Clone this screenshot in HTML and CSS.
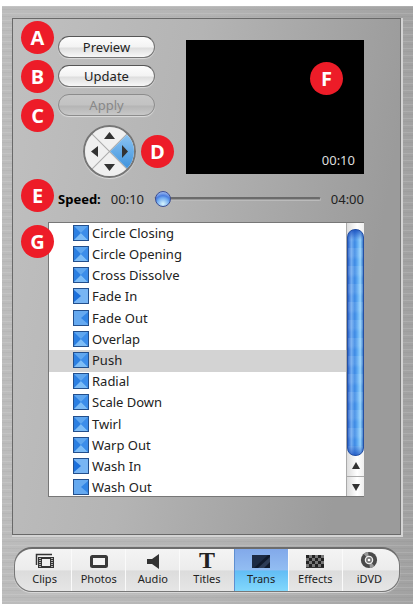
FILE: index.html
```html
<!DOCTYPE html>
<html lang="en">
<head>
    <meta charset="UTF-8">
    <meta name="viewport" content="width=device-width, initial-scale=1.0">
    <title>Transitions</title>
    <link rel="stylesheet" href="styles.css">
</head>
<body>
    <!-- Shared transition icons -->
    <svg class="defs" width="0" height="0" aria-hidden="true">
        <symbol id="both" viewBox="0 0 16 16">
            <rect width="16" height="16" fill="#3f8ee6"/>
            <path d="M1 1L8 8L1 15Z" fill="#2b7fe2"/>
            <path d="M1 1H15L8 8Z" fill="#5fa6ef"/>
            <path d="M1 15H15L8 8Z" fill="#7dbcf6"/>
            <path d="M15 1V15L8 8Z" fill="#3c8dea"/>
            <rect x=".5" y=".5" width="15" height="15" fill="none" stroke="#234f8c"/>
        </symbol>
        <symbol id="in" viewBox="0 0 16 16">
            <rect width="16" height="16" fill="#78b5f3"/>
            <path d="M1 2L8 8L1 14Z" fill="#1c70dc"/>
            <rect x=".5" y=".5" width="15" height="15" fill="none" stroke="#234f8c"/>
        </symbol>
        <symbol id="out" viewBox="0 0 16 16">
            <rect width="16" height="16" fill="#65a9f0"/>
            <path d="M15 2V14L8 8Z" fill="#3285e5"/>
            <rect x=".5" y=".5" width="15" height="15" fill="none" stroke="#234f8c"/>
        </symbol>
    </svg>

    <main class="window">
        <section class="panel">
            <div class="top">
                <div class="controls anchor">
                    <div class="badges">
                        <span class="badge">A</span>
                        <span class="badge">B</span>
                        <span class="badge">C</span>
                    </div>
                    <button class="pill">Preview</button>
                    <button class="pill">Update</button>
                    <button class="pill" disabled>Apply</button>
                    <div class="anchor pad-wrap">
                        <div class="pad">
                            <div class="pad-grid">
                                <button aria-label="Up"></button>
                                <button class="active" aria-label="Right"></button>
                                <button aria-label="Left"></button>
                                <button aria-label="Down"></button>
                            </div>
                        </div>
                        <svg class="pad-arrows" viewBox="0 0 53 53" aria-hidden="true">
                            <path d="M26.500 7L32 14H21ZM26.500 46L32 39H21ZM8 26.500L15 21V32ZM45 26.500L39 20V33Z" fill="#333"/>
                        </svg>
                        <span class="badge floating pad-badge">D</span>
                    </div>
                </div>
                <div class="video">
                    <span class="badge floating video-badge">F</span>
                    <span>00:10</span>
                </div>
            </div>

            <div class="speed anchor">
                <span class="badge floating speed-badge">E</span>
                <label for="speed">Speed:</label>
                <span>00:10</span>
                <input type="range" id="speed" min="10" max="400" value="10">
                <span>04:00</span>
            </div>

            <div class="list-box anchor">
                <span class="badge floating list-badge">G</span>
                <ul class="list">
                    <li><button><svg><use href="#both"/></svg>Circle Closing</button></li>
                    <li><button><svg><use href="#both"/></svg>Circle Opening</button></li>
                    <li><button><svg><use href="#both"/></svg>Cross Dissolve</button></li>
                    <li><button><svg><use href="#in"/></svg>Fade In</button></li>
                    <li><button><svg><use href="#out"/></svg>Fade Out</button></li>
                    <li><button><svg><use href="#both"/></svg>Overlap</button></li>
                    <li class="selected"><button><svg><use href="#both"/></svg>Push</button></li>
                    <li><button><svg><use href="#both"/></svg>Radial</button></li>
                    <li><button><svg><use href="#both"/></svg>Scale Down</button></li>
                    <li><button><svg><use href="#both"/></svg>Twirl</button></li>
                    <li><button><svg><use href="#both"/></svg>Warp Out</button></li>
                    <li><button><svg><use href="#in"/></svg>Wash In</button></li>
                    <li><button><svg><use href="#out"/></svg>Wash Out</button></li>
                </ul>
                <div class="scrollbar">
                    <div class="thumb"></div>
                    <button aria-label="Scroll up"><svg viewBox="0 0 8 8"><path d="M4 0L8 7H0Z" fill="#333"/></svg></button>
                    <button aria-label="Scroll down"><svg viewBox="0 0 8 8"><path d="M4 8L0 1H8Z" fill="#333"/></svg></button>
                </div>
            </div>
        </section>

        <nav class="tabs">
            <button>
                <svg viewBox="0 0 20 16" aria-hidden="true">
                    <path d="M1.500 12V1.500H17" fill="none" stroke="#333" stroke-width="1.500"/>
                    <path d="M3 4H19V15H3Z" fill="#333"/>
                    <path d="M7 6H15V13H7Z" fill="#eee"/>
                    <path d="M5 5V15M17 5V15" stroke="#ddd" stroke-width="1.500" stroke-dasharray="1 1"/>
                </svg>
                Clips
            </button>
            <button>
                <svg viewBox="0 0 20 16" aria-hidden="true">
                    <rect x="2.500" y="3.500" width="15" height="10" rx="1" fill="#f4f4f4" stroke="#3a3a3a" stroke-width="3"/>
                </svg>
                Photos
            </button>
            <button>
                <svg viewBox="0 0 20 16" aria-hidden="true">
                    <path d="M4 6H9L16 1V16L9 11H4Z" fill="#333"/>
                </svg>
                Audio
            </button>
            <button><span class="glyph">T</span>Titles</button>
            <button class="active">
                <svg viewBox="0 0 20 16" aria-hidden="true">
                    <rect x="1" y="2" width="18" height="13" fill="#1d2b44"/>
                    <path d="M3 15L17 2H19V15Z" fill="#101a2c"/>
                    <path d="M7 15L19 4V9L13 15Z" fill="#2c3b55"/>
                </svg>
                Trans
            </button>
            <button>
                <svg viewBox="0 0 20 16" aria-hidden="true">
                    <rect x="1" y="2" width="18" height="13" fill="#777"/>
                    <path d="M1 3.500H19M1 9.500H19" stroke="#222" stroke-width="3" stroke-dasharray="3 3"/>
                    <path d="M4 6.500H19M4 12.500H19" stroke="#222" stroke-width="3" stroke-dasharray="3 3"/>
                    <path d="M1 14.500H19" stroke="#333"/>
                </svg>
                Effects
            </button>
            <button>
                <svg class="disc" viewBox="0 0 20 20" aria-hidden="true">
                    <circle cx="10" cy="10" r="9" fill="#4a4a4a"/>
                    <path d="M10 10L4 3A9 9 0 0 1 9 1ZM10 10L16 17A9 9 0 0 1 11 19Z" fill="#999"/>
                    <circle cx="10" cy="10" r="4" fill="#777" stroke="#eee" stroke-width="1.500"/>
                    <circle cx="10" cy="10" r="1.500" fill="#fff"/>
                </svg>
                iDVD
            </button>
        </nav>
    </main>
</body>
</html>
```
FILE: styles.css
```css
* {
    box-sizing: border-box;
}
body {
    margin: 0;
    padding: 6px 2px 0;
    background-color: #fff;
    font-family: "Noto Sans", "Open Sans", sans-serif;
    font-size: 13px;
    line-height: 20px;
    color: #222;
}
button {
    margin: 0;
    padding: 0;
    border: none;
    background: none;
    font: inherit;
    color: inherit;
}
.defs {
    position: absolute;
}
.window {
    padding: 12px 12px 13px 10px;
    /* Brushed metal */
    background-image:
        repeating-linear-gradient(rgba(255, 255, 255, 0.12) 0 1px, transparent 1px 3px, rgba(0, 0, 0, 0.03) 3px 4px, transparent 4px 7px),
        linear-gradient(90deg, #bcbcbc, #b4b4b4 50%, #a2a2a2);
}
.panel {
    padding: 17px 36px 37px 35px;
    border: 1px solid #696969;
    border-right-color: #777;
    background-image: linear-gradient(100deg, #c0c0c0, #b4b4b4 40%, #9b9b9b 85%);
    box-shadow: 1px 1px 0 1px #d4d4d4;
}
.anchor {
    position: relative;
}

/* Letter markers */
.badge {
    width: 33px;
    height: 33px;
    border-radius: 50%;
    background-color: #ed1c28;
    font-family: "Open Sans", sans-serif;
    font-size: 20px;
    font-weight: bold;
    line-height: 33px;
    text-align: center;
    color: #fff;
}
.badges {
    position: absolute;
    left: -37px;
    top: -15px;
    display: flex;
    flex-direction: column;
    gap: 6px;
}
.floating {
    position: absolute;
}
.pad-badge {
    left: 58px;
    top: 10px;
}
.video-badge {
    top: 22px;
    right: 21px;
}
.speed-badge {
    left: -37px;
    top: -10px;
}
.list-badge {
    left: -28px;
    top: 2px;
}

/* Buttons and preview */
.top {
    display: flex;
    gap: 31px;
    padding-left: 10px;
}
.controls {
    z-index: 1;
    display: flex;
    flex-direction: column;
    gap: 7px;
    width: 97px;
}
.pill {
    display: block;
    width: 100%;
    height: 22px;
    border: 1px solid #777;
    border-top-color: #555;
    border-radius: 11px;
    background-image: linear-gradient(#fdfdfd, #f3f3f3 50%, #dedede 55%, #f8f8f8);
    box-shadow: 0 1px 1px #ddd;
}
.pill:disabled {
    border-color: #8c8c8c;
    background-image: linear-gradient(#c8c8c8, #c2c2c2 50%, #b5b5b5 55%, #c8c8c8);
    color: #888;
}
.pad-wrap {
    width: 53px;
    margin: 2px 0 0 25px;
}
.pad {
    height: 53px;
    border: 2px solid #777;
    border-radius: 50%;
    overflow: hidden;
    background-color: #aaa;
    box-shadow: 0 1px 1px #ddd;
}
.pad-grid {
    display: grid;
    grid-template-columns: 1fr 1fr;
    gap: 1px;
    height: 100%;
    transform: rotate(45deg);
}
.pad-grid button {
    background-color: #f0f0f0;
}
.pad-grid .active {
    background-image: linear-gradient(135deg, #8cc4f2, #3f93dd);
}
.pad-arrows {
    position: absolute;
    inset: 0;
    pointer-events: none;
}
.video {
    position: relative;
    flex: 1;
    display: flex;
    align-items: flex-end;
    justify-content: flex-end;
    height: 134px;
    margin-top: 4px;
    padding: 4px 9px;
    background-color: #000;
    color: #ddd;
}

/* Speed slider */
.speed {
    display: flex;
    align-items: center;
    gap: 10px;
    height: 20px;
    margin: 11px 0 13px 10px;
}
.speed label {
    font-weight: bold;
    color: #000;
}
.speed input {
    flex: 1;
    min-width: 0;
    height: 16px;
    margin: 0;
    appearance: none;
    background: none;
}
.speed input::-webkit-slider-runnable-track {
    height: 4px;
    border: 1px solid #bbb;
    border-top: 2px solid #6b6b6b;
    border-radius: 2px;
    background-color: #999;
}
.speed input::-webkit-slider-thumb {
    appearance: none;
    width: 16px;
    height: 16px;
    margin-top: -8px;
    border: 1px solid #3c4f94;
    border-radius: 50%;
    background-image: radial-gradient(circle at 50% 85%, #d8f6ff, #6fa9ef 45%, #4b7ee0 60%, #c9d9fa);
}

/* Transition list */
.list-box {
    display: flex;
    height: 275px;
    border: 1px solid #777;
    border-right: none;
    background-color: #fff;
}
.list {
    flex: 1;
    display: grid;
    grid-auto-rows: 1fr;
    height: 276px;
    margin: 0;
    padding: 0;
    clip-path: inset(0 0 3px 0);
    list-style: none;
    line-height: 18px;
}
.list li {
    display: flex;
}
.list button {
    flex: 1;
    display: flex;
    align-items: center;
    gap: 3px;
    padding: 0 0 2px 24px;
}
.list svg {
    width: 16px;
    height: 16px;
}
.list .selected {
    background-color: #d3d3d3;
}
.scrollbar {
    display: flex;
    flex-direction: column;
    width: 18px;
    padding-top: 6px;
    border-left: 1px solid #aaa;
    background-image: linear-gradient(90deg, #ddd, #fff 60%, #eee);
}
.thumb {
    flex: 1;
    border: 1px solid #2450a4;
    border-radius: 8px;
    background-image:
        linear-gradient(rgba(10, 60, 180, 0.7), transparent 10px, transparent 215px, rgba(10, 60, 180, 0.6)),
        repeating-linear-gradient(rgba(255, 255, 255, 0.1) 0 8px, transparent 12px 18px),
        linear-gradient(90deg, #2761c9, #74aef1 22%, #3e8ae4 45%, #59a5f0 60%, #93d2fd 82%, #3a7ac9);
}
.scrollbar button {
    display: flex;
    align-items: center;
    justify-content: center;
    height: 20px;
}
.scrollbar button + button {
    border-top: 1px solid #aaa;
}
.scrollbar svg {
    width: 8px;
    height: 8px;
}

/* Bottom tabs */
.tabs {
    display: flex;
    height: 45px;
    margin: 12px 1px 0 2px;
    padding: 0 3px;
    border: 1px solid #777;
    border-top: 2px solid #6c6c6c;
    border-radius: 18px;
    overflow: hidden;
    background-image: linear-gradient(#f4f4f4, #ececec 50%, #dcdcdc 52%, #e6e6e6);
    box-shadow: 0 1px 1px #ddd;
    font-size: 11px;
    line-height: 15px;
}
.tabs button {
    flex: 1;
    display: flex;
    flex-direction: column;
    align-items: center;
    justify-content: flex-end;
    gap: 2px;
    padding-bottom: 5px;
}
.tabs button + button {
    border-left: 1px solid #fafafa;
}
.tabs .active {
    border-color: #5f8fd0;
    background-image: linear-gradient(#82a9ea, #92bdf2 50%, #62bdf5 52%, #82d8fc);
}
.tabs svg {
    width: 20px;
    height: 16px;
}
.tabs .disc {
    width: 20px;
    height: 18px;
}
.glyph {
    font-family: "Liberation Serif", serif;
    font-size: 24px;
    font-weight: bold;
    line-height: 18px;
}
```
